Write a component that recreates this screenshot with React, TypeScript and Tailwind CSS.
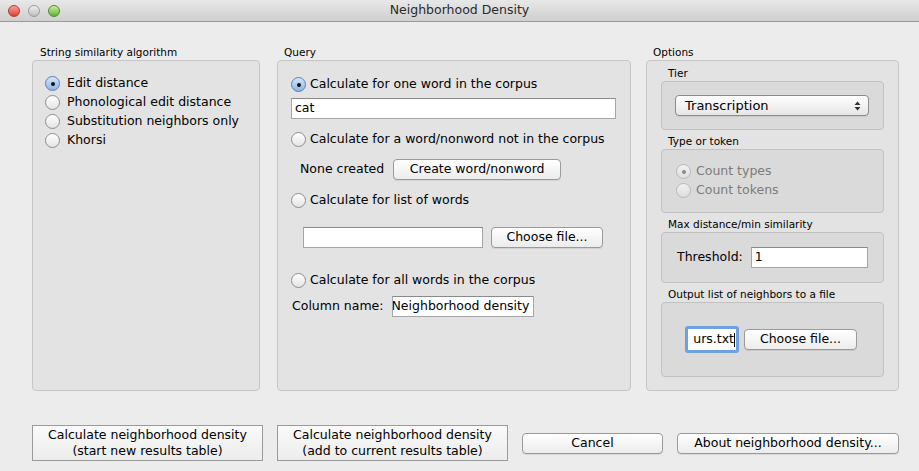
import React from "react";

const font = { fontFamily: '"DejaVu Sans", Verdana, sans-serif' };

function Radio({ checked = false, disabled = false }: { checked?: boolean; disabled?: boolean }) {
  return (
    <span
      className={`relative inline-block w-[15px] h-[15px] shrink-0 rounded-full border ${
        checked && !disabled
          ? "border-[#5b7fb5] bg-gradient-to-b from-[#d6e6f8] to-[#8db5e6]"
          : disabled
          ? "border-[#b8b8b8] bg-gradient-to-b from-[#f2f2f2] to-[#dedede]"
          : "border-[#8e8e8e] bg-gradient-to-b from-[#ffffff] to-[#e4e4e4]"
      }`}
    >
      {checked && (
        <span
          className={`absolute left-[5px] top-[5px] w-[4px] h-[4px] rounded-full ${
            disabled ? "bg-[#8a8a8a]" : "bg-[#111]"
          }`}
        />
      )}
    </span>
  );
}

function MacButton({ children, className = "" }: { children: React.ReactNode; className?: string }) {
  return (
    <div
      className={`flex items-center justify-center h-[21px] rounded-[4px] border border-[#9a9a9a] bg-gradient-to-b from-[#ffffff] to-[#ececec] text-[12.5px] text-black shadow-[0_1px_0_rgba(0,0,0,0.08)] ${className}`}
    >
      {children}
    </div>
  );
}

function Field({ children, className = "" }: { children?: React.ReactNode; className?: string }) {
  return (
    <div
      className={`h-[21px] bg-white border border-[#a6a6a6] border-t-[#8a8a8a] flex items-center px-[3px] text-[12.5px] overflow-hidden whitespace-nowrap ${className}`}
    >
      {children}
    </div>
  );
}

function GroupLabel({ children, className = "" }: { children: React.ReactNode; className?: string }) {
  return <div className={`text-[10.5px] leading-[15px] text-black ${className}`}>{children}</div>;
}

export default function App() {
  return (
    <div className="w-[919px] h-[471px] bg-[#ececec] overflow-hidden text-black" style={font}>
      {/* Title bar */}
      <div className="relative h-[22px] flex items-center justify-center bg-gradient-to-b from-[#e8e8e8] to-[#cfcfcf] border-b border-[#9a9a9a]">
        <div className="absolute left-[8px] top-[5px] flex gap-[8px]">
          <span className="w-[12px] h-[12px] rounded-full border border-[#b03a32] bg-gradient-to-b from-[#f4a09a] to-[#dc3a2e]" />
          <span className="w-[12px] h-[12px] rounded-full border border-[#9a9a9a] bg-gradient-to-b from-[#f0f0f0] to-[#bdbdbd]" />
          <span className="w-[12px] h-[12px] rounded-full border border-[#4f8a2e] bg-gradient-to-b from-[#c8ef9c] to-[#62b23a]" />
        </div>
        <span className="text-[12.5px] text-[#2a2a2a]">Neighborhood Density</span>
      </div>

      {/* Groups */}
      <div className="flex pl-[32px] pt-[23px]">
        {/* String similarity */}
        <div className="w-[228px]">
          <GroupLabel className="pl-[8px]">String similarity algorithm</GroupLabel>
          <div className="h-[331px] rounded-[4px] border border-[#c6c6c6] bg-[#e3e3e3] pt-[15px] pl-[12px] flex flex-col gap-[4px] text-[12.5px]">
            {[
              ["Edit distance", true],
              ["Phonological edit distance", false],
              ["Substitution neighbors only", false],
              ["Khorsi", false],
            ].map(([t, c]) => (
              <div key={t as string} className="flex items-center gap-[7px] h-[15px]">
                <Radio checked={c as boolean} />
                <span>{t as string}</span>
              </div>
            ))}
          </div>
        </div>

        {/* Query */}
        <div className="w-[354px] ml-[17px]">
          <GroupLabel className="pl-[7px]">Query</GroupLabel>
          <div className="h-[331px] rounded-[4px] border border-[#c6c6c6] bg-[#e3e3e3] pt-[16px] pl-[13px] pr-[14px] text-[12.5px] flex flex-col">
            <div className="flex items-center gap-[4px] h-[15px]">
              <Radio checked />
              <span>Calculate for one word in the corpus</span>
            </div>
            <Field className="mt-[6px] w-[325px]">cat</Field>
            <div className="flex items-center gap-[4px] h-[15px] mt-[13px]">
              <Radio />
              <span>Calculate for a word/nonword not in the corpus</span>
            </div>
            <div className="flex items-center mt-[12px] pl-[9px]">
              <span className="mr-[9px]">None created</span>
              <MacButton className="w-[168px]">Create word/nonword</MacButton>
            </div>
            <div className="flex items-center gap-[4px] h-[15px] mt-[13px]">
              <Radio />
              <span>Calculate for list of words</span>
            </div>
            <div className="flex items-center mt-[19px] pl-[12px]">
              <Field className="w-[180px]" />
              <MacButton className="w-[112px] ml-[8px]">Choose file...</MacButton>
            </div>
            <div className="flex items-center gap-[4px] h-[15px] mt-[25px]">
              <Radio />
              <span>Calculate for all words in the corpus</span>
            </div>
            <div className="flex items-center mt-[8px] pl-[1px]">
              <span className="mr-[8px]">Column name:</span>
              <Field className="w-[142px] !px-0">
                <span className="-ml-[1px]">Neighborhood density</span>
              </Field>
            </div>
          </div>
        </div>

        {/* Options */}
        <div className="w-[253px] ml-[15px]">
          <GroupLabel className="pl-[7px]">Options</GroupLabel>
          <div className="h-[331px] rounded-[4px] border border-[#c6c6c6] bg-[#e3e3e3] pt-[5px] px-[14px] text-[12.5px] flex flex-col">
            <GroupLabel className="pl-[7px]">Tier</GroupLabel>
            <div className="h-[49px] rounded-[4px] border border-[#c2c2c2] bg-[#dadada] flex items-center pl-[13px]">
              <div className="relative w-[194px] h-[21px] rounded-[4px] border border-[#8c8c8c] bg-gradient-to-b from-[#ffffff] to-[#e6e6e6] flex items-center pl-[9px] text-[13px] shadow-[0_1px_0_rgba(0,0,0,0.08)]">
                Transcription
                <svg className="absolute right-[7px] top-[5px]" width="7" height="10" viewBox="0 0 7 10">
                  <path d="M0.5 4 L3.5 0.5 L6.5 4 Z" fill="#333" />
                  <path d="M0.5 6 L3.5 9.5 L6.5 6 Z" fill="#333" />
                </svg>
              </div>
            </div>
            <GroupLabel className="pl-[7px] mt-[4px]">Type or token</GroupLabel>
            <div className="h-[64px] rounded-[4px] border border-[#c2c2c2] bg-[#dadada] flex flex-col justify-center gap-[4px] pl-[14px] text-[#7c7c7c]">
              <div className="flex items-center gap-[5px] h-[15px]">
                <Radio checked disabled />
                <span>Count types</span>
              </div>
              <div className="flex items-center gap-[5px] h-[15px]">
                <Radio disabled />
                <span>Count tokens</span>
              </div>
            </div>
            <GroupLabel className="pl-[7px] mt-[4px]">Max distance/min similarity</GroupLabel>
            <div className="h-[51px] rounded-[4px] border border-[#c2c2c2] bg-[#dadada] flex items-center pl-[15px]">
              <span className="mr-[8px]">Threshold:</span>
              <Field className="w-[117px]">1</Field>
            </div>
            <GroupLabel className="pl-[7px] mt-[4px]">Output list of neighbors to a file</GroupLabel>
            <div className="h-[75px] rounded-[4px] border border-[#c2c2c2] bg-[#dadada] flex items-center pl-[23px]">
              <div className="w-[54px] h-[27px] rounded-[3px] bg-[#6fa0e0] p-[3px]">
                <div className="w-full h-full bg-white flex items-center justify-end pr-[1px] overflow-hidden whitespace-nowrap">
                  <span>urs.txt</span>
                  <span className="w-[1px] h-[14px] bg-black" />
                </div>
              </div>
              <MacButton className="w-[113px] ml-[5px]">Choose file...</MacButton>
            </div>
          </div>
        </div>
      </div>

      {/* Bottom buttons */}
      <div className="flex items-center pl-[32px] mt-[34px] text-[12.5px]">
        <div className="w-[231px] h-[36px] border border-[#9a9a9a] bg-gradient-to-b from-[#fafafa] to-[#ececec] flex flex-col items-center justify-center leading-[16px]">
          <span>Calculate neighborhood density</span>
          <span>(start new results table)</span>
        </div>
        <div className="w-[231px] h-[36px] ml-[14px] border border-[#9a9a9a] bg-gradient-to-b from-[#fafafa] to-[#ececec] flex flex-col items-center justify-center leading-[16px]">
          <span>Calculate neighborhood density</span>
          <span>(add to current results table)</span>
        </div>
        <MacButton className="w-[141px] ml-[14px]">Cancel</MacButton>
        <MacButton className="w-[222px] ml-[14px]">About neighborhood density...</MacButton>
      </div>
    </div>
  );
}
